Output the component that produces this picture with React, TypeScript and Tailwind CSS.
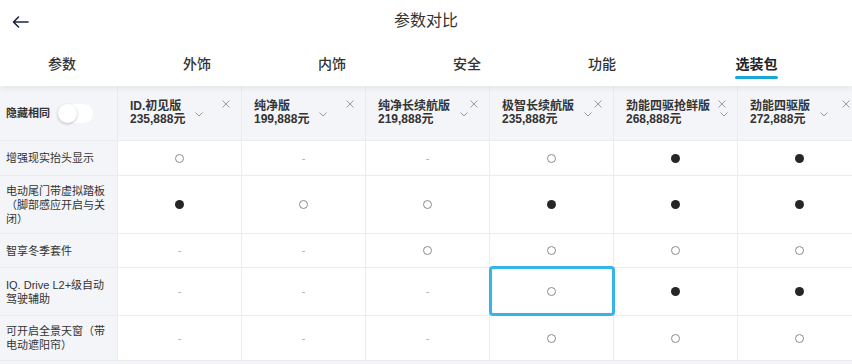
import React from 'react';

type Mark = 'o' | 'x' | '-';

interface Trim {
  name: string;
  price: string;
}

interface Row {
  label: string;
  h: string;
  marks: Mark[];
  focus?: number;
}

const trims: Trim[] = [
  { name: 'ID.初见版', price: '235,888元' },
  { name: '纯净版', price: '199,888元' },
  { name: '纯净长续航版', price: '219,888元' },
  { name: '极智长续航版', price: '235,888元' },
  { name: '劲能四驱抢鲜版', price: '268,888元' },
  { name: '劲能四驱版', price: '272,888元' },
];

const rows: Row[] = [
  { label: '增强现实抬头显示', h: 'h-[35px]', marks: ['o', '-', '-', 'o', 'x', 'x'] },
  { label: '电动尾门带虚拟踏板（脚部感应开启与关闭）', h: 'h-[58px]', marks: ['x', 'o', 'o', 'x', 'x', 'x'] },
  { label: '智享冬季套件', h: 'h-[34px]', marks: ['-', '-', 'o', 'o', 'o', 'o'] },
  { label: 'IQ. Drive L2+级自动驾驶辅助', h: 'h-[48px]', marks: ['-', '-', '-', 'o', 'x', 'x'], focus: 3 },
  { label: '可开启全景天窗（带电动遮阳帘）', h: 'h-[45px]', marks: ['-', '-', '-', 'o', 'o', 'o'] },
];

const tabs = ['参数', '外饰', '内饰', '安全', '功能'];

const font = { fontFamily: '"Liberation Sans", "Noto Sans CJK SC", sans-serif' };

const MarkCell: React.FC<{ mark: Mark }> = ({ mark }) => {
  if (mark === 'o') return <span className="block w-[9px] h-[9px] rounded-full border border-[#8c8c8c]" />;
  if (mark === 'x') return <span className="block w-[9px] h-[9px] rounded-full bg-[#262626]" />;
  return <span className="text-[11px] text-[#aaaaaa]">-</span>;
};

const Chevron = () => (
  <svg width="8" height="5" viewBox="0 0 8 5" fill="none" className="mt-[3px] ml-[10px] shrink-0">
    <path d="M0.5 0.5 L4 4 L7.5 0.5" stroke="#9a9a9a" strokeWidth="1" />
  </svg>
);

const Close = () => (
  <svg width="8" height="8" viewBox="0 0 8 8" fill="none" className="absolute top-[14px] right-[11px]">
    <path d="M0.5 0.5 L7.5 7.5 M7.5 0.5 L0.5 7.5" stroke="#9a9a9a" strokeWidth="1" />
  </svg>
);

export default function App() {
  return (
    <div className="w-[852px] h-[364px] overflow-hidden bg-[#f4f5f8] text-[#333]" style={font}>
      {/* top bar + tabs */}
      <div className="relative z-10 bg-white shadow-[0_2px_6px_rgba(0,0,0,0.07)]">
        <div className="relative h-[42px] flex items-center justify-center">
          <svg width="17" height="12" viewBox="0 0 17 12" fill="none" className="absolute left-[12px] top-[16px]">
            <path d="M16 6 H1.5 M6.5 1 L1.5 6 L6.5 11" stroke="#1b2440" strokeWidth="1.6" strokeLinecap="round" strokeLinejoin="round" />
          </svg>
          <span className="text-[16px] text-[#333]">参数对比</span>
        </div>
        <div className="h-[44px] flex pl-[48px] gap-[107px]">
          {tabs.map((t) => (
            <div key={t} className="pt-[12px] text-[14px] leading-[20px] font-medium text-[#333]">{t}</div>
          ))}
          <div className="ml-[12px] pt-[12px] flex flex-col items-center">
            <span className="text-[14px] leading-[20px] font-bold text-[#222]">选装包</span>
            <span className="mt-[2px] w-[43px] h-[3px] rounded-full bg-[#1aa8d6]" />
          </div>
        </div>
      </div>

      {/* table */}
      <div className="grid grid-cols-[118px_repeat(6,124px)]">
        <div className="h-[55px] flex items-center pl-[6px] gap-[8px] border-r border-b border-[#e9ebef]">
          <span className="text-[11px] font-bold">隐藏相同</span>
          <span className="relative w-[35px] h-[19px] rounded-full bg-white">
            <span className="absolute left-0 top-0 w-[19px] h-[19px] rounded-full bg-white shadow-[0_1px_3px_rgba(0,0,0,0.25)]" />
          </span>
        </div>
        {trims.map((t) => (
          <div key={t.name} className="relative h-[55px] flex items-center pl-[12px] border-r border-b border-[#e9ebef]">
            <div className="text-[12px] leading-[13px] font-bold text-[#333] whitespace-nowrap">
              <div>{t.name}</div>
              <div>{t.price}</div>
            </div>
            <Chevron />
            <Close />
          </div>
        ))}

        {rows.map((r) => (
          <React.Fragment key={r.label}>
            <div className={`${r.h} flex items-center px-[6px] text-[11px] leading-[14px] text-[#333] border-r border-b border-[#e9ebef]`}>
              {r.label}
            </div>
            {r.marks.map((m, i) => (
              <div key={i} className={`${r.h} relative flex items-center justify-center bg-white border-r border-b border-[#ececec]`}>
                <MarkCell mark={m} />
                {r.focus === i && (
                  <span className="absolute z-10 -left-[1px] -right-[2px] -top-[2px] bottom-[-1px] border-[3px] border-[#35b4ec] rounded-[4px]" />
                )}
              </div>
            ))}
          </React.Fragment>
        ))}
      </div>
    </div>
  );
}
